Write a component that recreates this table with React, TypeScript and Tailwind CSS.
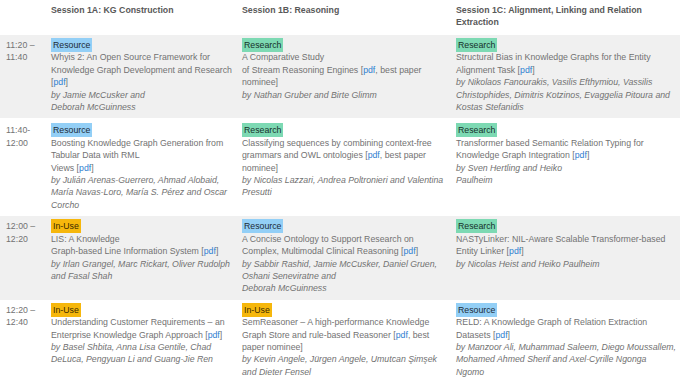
import React from "react";

type Tag = "Resource" | "Research" | "In-Use";

const tagClass: Record<Tag, string> = {
  Resource: "bg-[#93cff6] text-[#1d2b36]",
  Research: "bg-[#7dd9b3] text-[#16302a]",
  "In-Use": "bg-[#f6b70c] text-[#3a2a00]",
};

type Paper = {
  tag: Tag;
  title: React.ReactNode[];
  authors: string[];
};

const Pdf = () => <span className="text-[#2f80d0]">pdf</span>;

const rows: { time: [string, string]; gray: boolean; papers: Paper[] }[] = [
  {
    time: ["11:20 –", "11:40"],
    gray: true,
    papers: [
      {
        tag: "Resource",
        title: [
          "Whyis 2: An Open Source Framework for",
          "Knowledge Graph Development and Research",
          <>[<Pdf />]</>,
        ],
        authors: ["by Jamie McCusker and", "Deborah McGuinness"],
      },
      {
        tag: "Research",
        title: [
          "A Comparative Study",
          <>of Stream Reasoning Engines [<Pdf />, best paper</>,
          "nominee]",
        ],
        authors: ["by Nathan Gruber and Birte Glimm"],
      },
      {
        tag: "Research",
        title: [
          "Structural Bias in Knowledge Graphs for the Entity",
          <>Alignment Task [<Pdf />]</>,
        ],
        authors: [
          "by Nikolaos Fanourakis, Vasilis Efthymiou, Vassilis",
          "Christophides, Dimitris Kotzinos, Evaggelia Pitoura and",
          "Kostas Stefanidis",
        ],
      },
    ],
  },
  {
    time: ["11:40-", "12:00"],
    gray: false,
    papers: [
      {
        tag: "Resource",
        title: [
          "Boosting Knowledge Graph Generation from",
          "Tabular Data with RML",
          <>Views [<Pdf />]</>,
        ],
        authors: [
          "by Julián Arenas-Guerrero, Ahmad Alobaid,",
          "María Navas-Loro, María S. Pérez and Oscar",
          "Corcho",
        ],
      },
      {
        tag: "Research",
        title: [
          "Classifying sequences by combining context-free",
          <>grammars and OWL ontologies [<Pdf />, best paper</>,
          "nominee]",
        ],
        authors: [
          "by Nicolas Lazzari, Andrea Poltronieri and Valentina",
          "Presutti",
        ],
      },
      {
        tag: "Research",
        title: [
          "Transformer based Semantic Relation Typing for",
          <>Knowledge Graph Integration [<Pdf />]</>,
        ],
        authors: ["by Sven Hertling and Heiko", "Paulheim"],
      },
    ],
  },
  {
    time: ["12:00 –", "12:20"],
    gray: true,
    papers: [
      {
        tag: "In-Use",
        title: [
          "LIS: A Knowledge",
          <>Graph-based Line Information System [<Pdf />]</>,
        ],
        authors: [
          "by Irlan Grangel, Marc Rickart, Oliver Rudolph",
          "and Fasal Shah",
        ],
      },
      {
        tag: "Resource",
        title: [
          "A Concise Ontology to Support Research on",
          <>Complex, Multimodal Clinical Reasoning [<Pdf />]</>,
        ],
        authors: [
          "by Sabbir Rashid, Jamie McCusker, Daniel Gruen,",
          "Oshani Seneviratne and",
          "Deborah McGuinness",
        ],
      },
      {
        tag: "Research",
        title: [
          "NASTyLinker: NIL-Aware Scalable Transformer-based",
          <>Entity Linker [<Pdf />]</>,
        ],
        authors: ["by Nicolas Heist and Heiko Paulheim"],
      },
    ],
  },
  {
    time: ["12:20 –", "12:40"],
    gray: false,
    papers: [
      {
        tag: "In-Use",
        title: [
          "Understanding Customer Requirements – an",
          <>Enterprise Knowledge Graph Approach [<Pdf />]</>,
        ],
        authors: [
          "by Basel Shbita, Anna Lisa Gentile, Chad",
          "DeLuca, Pengyuan Li and Guang-Jie Ren",
        ],
      },
      {
        tag: "In-Use",
        title: [
          "SemReasoner – A high-performance Knowledge",
          <>Graph Store and rule-based Reasoner [<Pdf />, best</>,
          "paper nominee]",
        ],
        authors: [
          "by Kevin Angele, Jürgen Angele, Umutcan Şimşek",
          "and Dieter Fensel",
        ],
      },
      {
        tag: "Resource",
        title: [
          "RELD: A Knowledge Graph of Relation Extraction",
          <>Datasets [<Pdf />]</>,
        ],
        authors: [
          "by Manzoor Ali, Muhammad Saleem, Diego Moussallem,",
          "Mohamed Ahmed Sherif and Axel-Cyrille Ngonga",
          "Ngomo",
        ],
      },
    ],
  },
];

const grid = "grid grid-cols-[51px_191px_214px_224px]";

function Cell({ p }: { p: Paper }) {
  return (
    <div className="pr-[4px] whitespace-nowrap">
      <div>
        <span className={`px-[2px] py-[2px] ${tagClass[p.tag]}`}>{p.tag}</span>
      </div>
      {p.title.map((t, i) => (
        <div key={i}>{t}</div>
      ))}
      {p.authors.map((a, i) => (
        <div key={i} className="italic">
          {a}
        </div>
      ))}
    </div>
  );
}

export default function App() {
  return (
    <div
      className="w-[680px] h-[383px] overflow-hidden bg-white text-[#727272] text-[8.75px] leading-[12.4px]"
      style={{ fontFamily: '"Liberation Sans", Arial, sans-serif' }}
    >
      <div className={`${grid} pt-[4px] h-[35px] font-bold text-[#595959]`}>
        <div />
        <div>Session 1A: KG Construction</div>
        <div>Session 1B: Reasoning</div>
        <div>
          Session 1C: Alignment, Linking and Relation
          <br />
          Extraction
        </div>
      </div>
      {rows.map((r, i) => (
        <div
          key={i}
          className={`${grid} ${i === 1 ? "pt-[6px] pb-[5px]" : "pt-[4px] pb-[5px]"} ${r.gray ? "bg-[#f0f0f0]" : "bg-white"}`}
        >
          <div className="pl-[6px]">
            <div>{r.time[0]}</div>
            <div>{r.time[1]}</div>
          </div>
          {r.papers.map((p, j) => (
            <Cell key={j} p={p} />
          ))}
        </div>
      ))}
    </div>
  );
}
